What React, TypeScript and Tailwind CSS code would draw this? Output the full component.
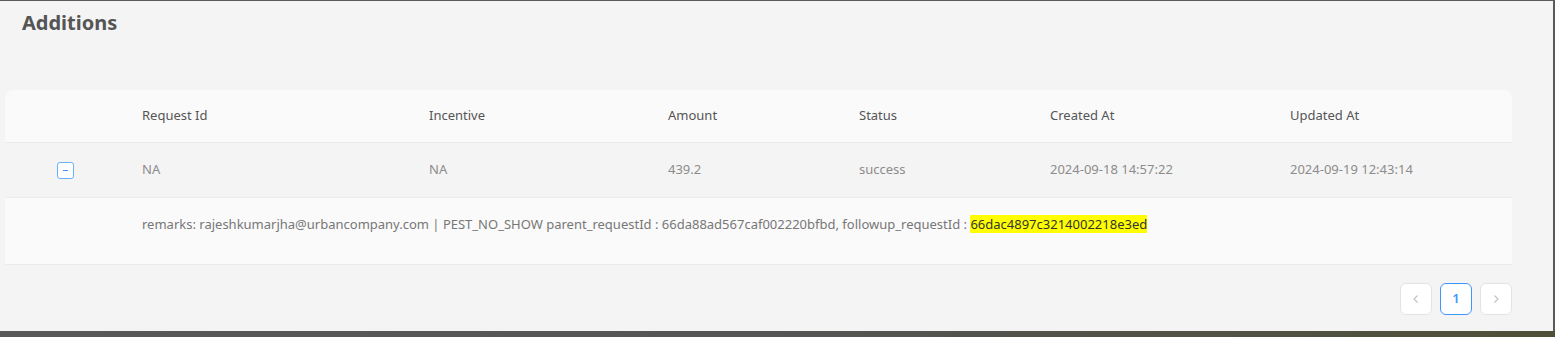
const font = { fontFamily: '"Segoe UI", "Noto Sans", "Open Sans", sans-serif' }

const cols = 'grid grid-cols-[121px_287px_239px_191px_191px_240px_1fr]'

const headers = ['Request Id', 'Incentive', 'Amount', 'Status', 'Created At', 'Updated At']
const row = ['NA', 'NA', '439.2', 'success', '2024-09-18 14:57:22', '2024-09-19 12:43:14']

function ExpandIcon() {
  return (
    <div className="w-[17px] h-[17px] border border-[#69b1ff] rounded-[3px] bg-white flex items-center justify-center">
      <div className="w-[5px] h-px bg-[#4096ff]" />
    </div>
  )
}

function Pager() {
  return (
    <div className="flex justify-end gap-2 pr-[41px] pt-[18px]">
      <button className="w-8 h-8 rounded-md border border-[#e3e3e3] bg-white flex items-center justify-center text-[#c4c4c4]">
        <svg width="10" height="10" viewBox="0 0 10 10" fill="none" stroke="currentColor" strokeWidth="1.2">
          <path d="M6.5 1.5 3 5l3.5 3.5" />
        </svg>
      </button>
      <button className="w-8 h-8 rounded-md border border-[#4096ff] bg-white flex items-center justify-center text-[13px] font-semibold text-[#4096ff]">
        1
      </button>
      <button className="w-8 h-8 rounded-md border border-[#e3e3e3] bg-white flex items-center justify-center text-[#c4c4c4]">
        <svg width="10" height="10" viewBox="0 0 10 10" fill="none" stroke="currentColor" strokeWidth="1.2">
          <path d="M3.5 1.5 7 5 3.5 8.5" />
        </svg>
      </button>
    </div>
  )
}

export default function App() {
  return (
    <div className="h-[337px] flex flex-col bg-[#f4f4f4]" style={font}>
      <div className="flex-1 border-t border-t-[#5a5a5a] border-r-2 border-r-[#5a5a5a]">
        <h2 className="pl-[22px] pt-[9px] text-[20px] font-bold text-[#555] leading-[26px]">Additions</h2>

        <div className="ml-[5px] mr-[41px] mt-[54px] text-[13px]">
          <div className={`${cols} h-[53px] items-center bg-[#fafafa] rounded-t-lg border-b border-[#ebebeb] text-[#555]`}>
            <div />
            {headers.map((h) => (
              <div key={h} className="pl-4">{h}</div>
            ))}
          </div>
          <div className={`${cols} h-[55px] items-center border-b border-[#ebebeb] text-[#8c8c8c]`}>
            <div className="flex justify-center">
              <ExpandIcon />
            </div>
            {row.map((v, i) => (
              <div key={i} className="pl-4">{v}</div>
            ))}
          </div>
          <div className="h-[67px] bg-[#fafafa] border-b border-[#ebebeb] pl-[137px] pt-[17px] text-[#777]">
            remarks: rajeshkumarjha@urbancompany.com | PEST_NO_SHOW parent_requestId : 66da88ad567caf002220bfbd, followup_requestId :{' '}
            <span className="bg-[#ffff00] text-[#333]">66dac4897c3214002218e3ed</span>
          </div>
        </div>

        <Pager />
      </div>
      <div className="h-[6px] bg-gradient-to-r from-[#595959] via-[#555] to-[#4f4f38]" />
    </div>
  )
}
